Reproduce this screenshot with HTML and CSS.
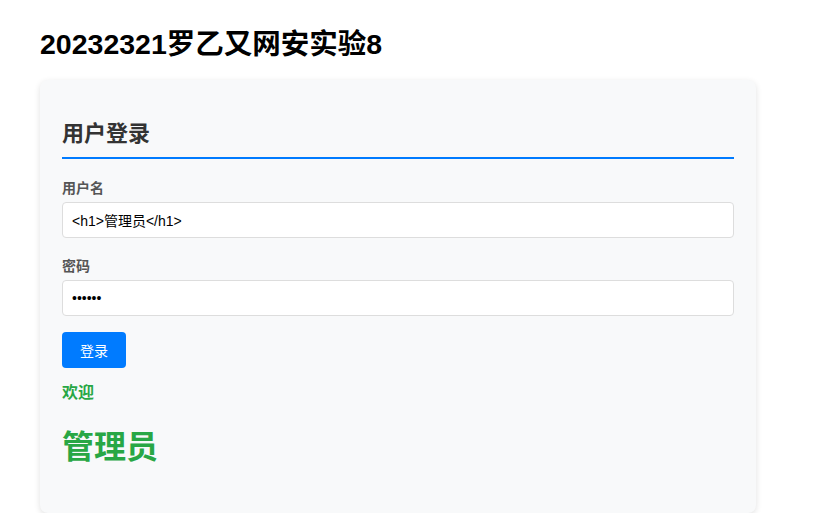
FILE: index.html
```html
<!DOCTYPE html>
<html lang="zh-CN">
<head>
<meta charset="utf-8">
<title>20232321罗乙又网安实验8</title>
<link rel="stylesheet" href="styles.css">
</head>
<body>
<h1 class="page-title">20232321罗乙又网安实验8</h1>
<div class="card">
  <h2 class="card-title">用户登录</h2>
  <form class="login-form">
    <label class="field-label" for="username">用户名</label>
    <input class="field-input" id="username" type="text" value="<h1>管理员</h1>">
    <label class="field-label" for="password">密码</label>
    <input class="field-input field-input-last" id="password" type="password" value="123456">
    <button class="btn-login" type="button">登录</button>
  </form>
  <p class="welcome">欢迎</p>
  <div class="user-name">管理员</div>
</div>
</body>
</html>
```
FILE: styles.css
```css
html, body {
  margin: 0;
  background: #ffffff;
}
body {
  padding: 27px 40px 0;
  font-family: "Liberation Sans", "Noto Sans CJK SC", sans-serif;
  font-size: 14px;
  color: #000;
}
.page-title {
  margin: 0;
  font-size: 28.5px;
  line-height: 34px;
  font-weight: bold;
  color: #000;
}
.card {
  margin-top: 19px;
  width: 716px;
  box-sizing: border-box;
  padding: 40px 22px 47px;
  background: #f8f9fa;
  border-radius: 8px;
  box-shadow: 0 2px 6px rgba(0, 0, 0, 0.12);
}
.card-title {
  margin: 0;
  font-size: 22px;
  line-height: 28px;
  font-weight: bold;
  color: #333;
  padding-bottom: 9px;
  border-bottom: 2px solid #007bff;
}
.login-form {
  display: flex;
  flex-direction: column;
  align-items: flex-start;
  margin-top: 19px;
}
.field-label {
  display: block;
  font-size: 14px;
  line-height: 20px;
  font-weight: bold;
  color: #555;
  margin-bottom: 4px;
}
.field-input {
  width: 100%;
  height: 36px;
  box-sizing: border-box;
  margin: 0 0 18px;
  padding: 0 9px;
  border: 1px solid #ddd;
  border-radius: 4px;
  background: #fff;
  font-family: "Liberation Sans", "Noto Sans CJK SC", sans-serif;
  font-size: 14px;
  color: #000;
  outline: none;
}
.field-input-last {
  margin-bottom: 16px;
}
.btn-login {
  height: 36px;
  padding: 0 18px;
  border: none;
  border-radius: 4px;
  background: #007bff;
  color: #fff;
  font-family: "Liberation Sans", "Noto Sans CJK SC", sans-serif;
  font-size: 14px;
  cursor: pointer;
}
.welcome {
  margin: 14px 0 0;
  font-size: 16px;
  line-height: 22px;
  font-weight: bold;
  color: #28a745;
}
.user-name {
  margin-top: 24px;
  font-size: 32px;
  line-height: 38px;
  font-weight: bold;
  color: #28a745;
}
```
